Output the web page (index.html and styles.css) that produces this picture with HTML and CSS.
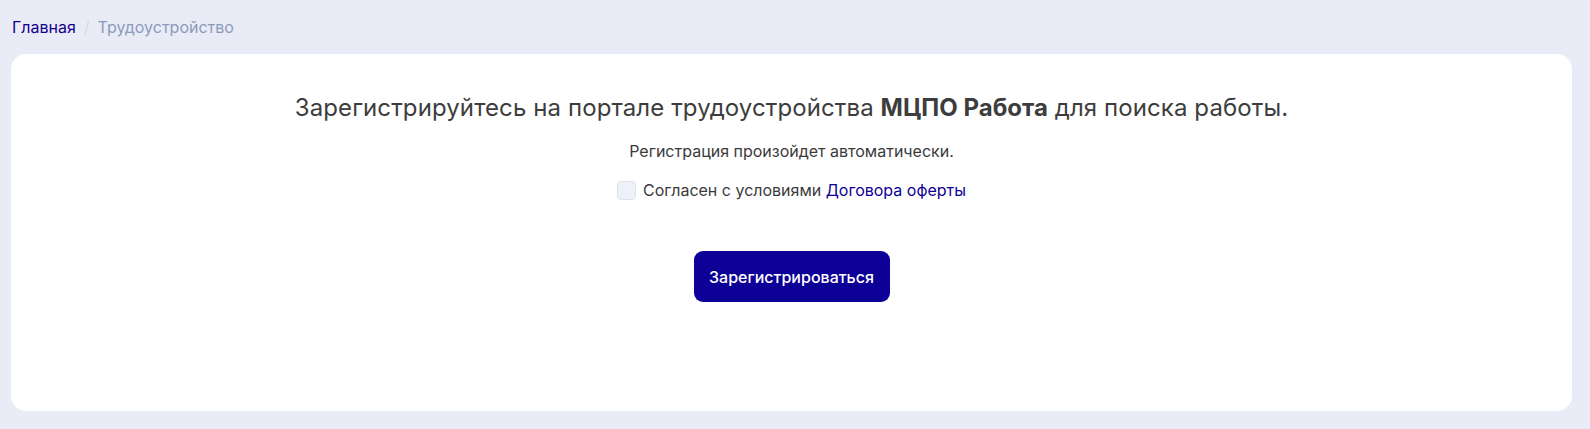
FILE: index.html
```html
<!DOCTYPE html>
<html lang="ru">
<head>
<meta charset="utf-8">
<title>Трудоустройство</title>
<link rel="stylesheet" href="styles.css">
</head>
<body>
<div class="page">
  <nav class="breadcrumb">
    <a class="crumb-link" href="#">Главная</a>
    <span class="crumb-sep">/</span>
    <span class="crumb-current">Трудоустройство</span>
  </nav>
  <section class="card">
    <h1 class="title">Зарегистрируйтесь на портале трудоустройства <b>МЦПО Работа</b> для поиска работы.</h1>
    <p class="note">Регистрация произойдет автоматически.</p>
    <label class="agree">
      <span class="box"></span>
      <span>Согласен с условиями <a class="link" href="#">Договора оферты</a></span>
    </label>
    <button class="btn" type="button">Зарегистрироваться</button>
  </section>
</div>
</body>
</html>
```

FILE: styles.css
```css
* { box-sizing: border-box; }
html, body { margin: 0; padding: 0; }
body {
  background: #e9ecf6;
  font-family: Inter, "Noto Sans", "Liberation Sans", sans-serif;
  color: #3a3a3a;
  width: 1590px;
  height: 429px;
  overflow: hidden;
}
.page {
  padding: 17px 18px 0 11px;
}
.breadcrumb {
  display: flex;
  align-items: center;
  gap: 8px;
  font-size: 16px;
  line-height: 20px;
  padding-left: 1px;
  height: 20px;
}
.crumb-link { color: #15008c; text-decoration: none; }
.crumb-sep { color: #d4d9e6; }
.crumb-current { color: #8b9bbc; }
.card {
  margin-top: 17px;
  background: #fff;
  border-radius: 15px;
  height: 357px;
  padding-top: 38px;
  display: flex;
  flex-direction: column;
  align-items: center;
}
.title {
  margin: 0;
  font-size: 24px;
  line-height: 32px;
  font-weight: 400;
  letter-spacing: 0.1px;
  color: #3d3d3d;
}
.title b { font-weight: 700; letter-spacing: 0; }
.note {
  margin: 16px 0 0;
  font-size: 16px;
  line-height: 22px;
  color: #3a3a3a;
}
.agree {
  margin-top: 17px;
  display: flex;
  align-items: center;
  gap: 7px;
  font-size: 16px;
  line-height: 22px;
  color: #3a3a3a;
}
.box {
  width: 19px;
  height: 19px;
  border: 1px solid #dde2ee;
  background: #eef1f8;
  border-radius: 4px;
}
.link { color: #0d0094; text-decoration: none; }
.btn {
  margin-top: 50px;
  width: 196px;
  height: 51px;
  border: none;
  border-radius: 9px;
  background: #0c0096;
  color: #fff;
  font-family: inherit;
  font-size: 16px;
  font-weight: 500;
}
```
